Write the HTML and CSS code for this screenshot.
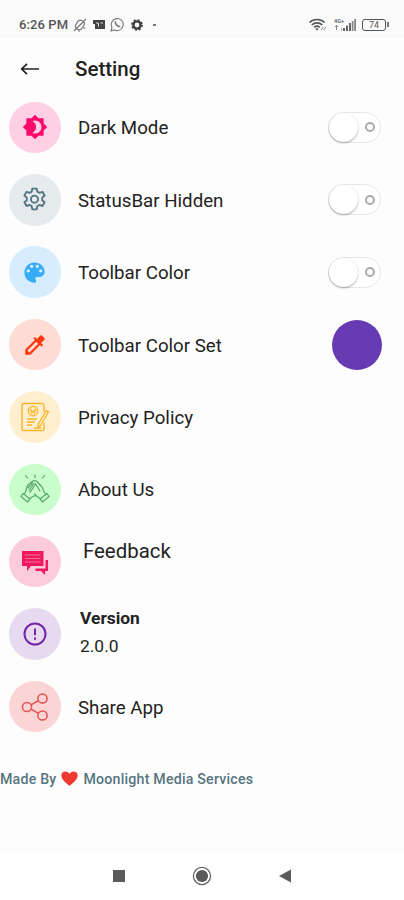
FILE: index.html
```html
<!DOCTYPE html>
<html lang="en">

<head>
    <meta charset="UTF-8">
    <meta name="viewport" content="width=device-width, initial-scale=1.0">
    <title>Setting</title>
    <link rel="stylesheet" href="styles.css">
</head>

<body>
    <!-- Status bar -->
    <div class="status-bar">
        <span class="time">6:26 PM</span>
        <div class="status-left">
            <svg width="14" height="14" viewBox="0 0 14 14" fill="none" stroke="#777" stroke-width="1.2">
                <path d="M2 8.500l3-5.500q3-2 5.500.5 2 2 0 4.500L8 11.500H4.500M2 8.500l2.500 3M1 13L13 1M5 12.800l2 .2M10 10h2.500"/>
            </svg>
            <svg width="12" height="10" viewBox="0 0 12 10">
                <path fill="#444" d="M0 0h12v9H2V4H0z"/>
                <path stroke="#ddd" stroke-width="1" d="M3 3h2M5.500 3v3.500M7.500 3h2.500"/>
            </svg>
            <svg width="15" height="15" viewBox="0 0 15 15" fill="none" stroke="#777" stroke-width="1.100">
                <path d="M1 14l1-3.500a6 6 0 1 1 2.500 2.400z"/>
                <path stroke-width="1.500" d="M5.300 4.300c-.3 3 2.200 5.400 5 5.300"/>
            </svg>
            <svg width="12" height="12" viewBox="0 0 12 12" fill="none" stroke="#3c3c3c">
                <circle cx="6" cy="6" r="3.600" stroke-width="2.400"/>
                <circle cx="6" cy="6" r="5.100" stroke-width="1.600" stroke-dasharray="2 2"/>
            </svg>
            <span class="dot"></span>
        </div>
        <div class="status-right">
            <svg width="20" height="14" viewBox="0 0 20 14" fill="none" stroke="#555" stroke-width="1.700">
                <path d="M1.500 4.500c4-4 11-4 15 0M3.800 7c3-2.800 7.500-2.800 10.500 0M6.200 9.400c1.600-1.400 4-1.400 5.600 0"/>
                <path fill="#444" stroke="none" d="M7.300 10.500h3.400L9 12.700z"/>
                <path stroke="#888" stroke-width="1" d="M13 12l2.500-3M15.500 12L18 9"/>
            </svg>
            <svg class="signal" width="22" height="13" viewBox="0 0 22 13" fill="#666">
                <text x="0" y="5" font-size="5.500" font-weight="bold">4G+</text>
                <path fill="none" stroke="#888" d="M2.500 7v5M1 8.500h3M7.500 12.500v-2"/>
                <path d="M9 10h2v3H9zM12 7.500h2V13h-2zM15 5h2v8h-2z"/>
                <path fill="#888" d="M17.800 3h1.700v10h-1.700zM20.200 1H22v12h-1.800z"/>
            </svg>
            <div class="battery">74</div>
        </div>
    </div>

    <!-- Toolbar -->
    <header class="toolbar">
        <svg width="20" height="14" viewBox="0 0 20 14" fill="none" stroke="#222" stroke-width="1.700">
            <path d="M1.500 7H19M7 1.800L1.700 7 7 12.200"/>
        </svg>
        <h1>Setting</h1>
    </header>

    <main class="settings">
        <div class="row">
            <div class="icon pink">
                <svg width="26" height="26" viewBox="0 0 24 24" fill="#fb0a6b">
                    <path d="M20 8.690V4h-4.690L12 .69 8.690 4H4v4.690L.69 12 4 15.310V20h4.690L12 23.310 15.310 20H20v-4.690L23.310 12 20 8.690zM12 18c-.89 0-1.740-.2-2.500-.55C11.560 16.500 13 14.420 13 12s-1.440-4.500-3.500-5.450C10.260 6.200 11.110 6 12 6c3.310 0 6 2.690 6 6s-2.690 6-6 6z"/>
                </svg>
            </div>
            <span class="label">Dark Mode</span>
            <div class="switch"></div>
        </div>

        <div class="row">
            <div class="icon grey">
                <svg width="25" height="25" viewBox="0 0 24 24" fill="none" stroke="#547583" stroke-width="1.800" stroke-linejoin="round">
                    <path d="M9.900 1.500h4.200l.6 3 2 1.150 2.900-1 2.100 3.600-2.300 2v2.400l2.300 2-2.100 3.600-2.900-1-2 1.150-.6 3.100H9.900l-.6-3.100-2-1.150-2.900 1-2.100-3.600 2.300-2v-2.400l-2.300-2 2.100-3.600 2.900 1 2-1.150z"/>
                    <circle cx="12" cy="11.700" r="3.400"/>
                </svg>
            </div>
            <span class="label">StatusBar Hidden</span>
            <div class="switch"></div>
        </div>

        <div class="row">
            <div class="icon blue">
                <svg width="27" height="27" viewBox="0 0 24 24" fill="#38adf7">
                    <path d="M12 3c-4.970 0-9 4.030-9 9s4.030 9 9 9c.83 0 1.500-.67 1.500-1.500 0-.39-.15-.74-.39-1.010-.23-.26-.38-.61-.38-.99 0-.83.67-1.500 1.500-1.500H16c2.760 0 5-2.240 5-5 0-4.420-4.030-8-9-8zm-5.500 9c-.83 0-1.500-.67-1.500-1.500S5.670 9 6.500 9 8 9.670 8 10.500 7.330 12 6.500 12zm3-4C8.670 8 8 7.330 8 6.500S8.670 5 9.500 5s1.500.67 1.500 1.500S10.330 8 9.500 8zm5 0c-.83 0-1.500-.67-1.500-1.500S13.670 5 14.500 5s1.500.67 1.500 1.500S15.330 8 14.500 8zm3 4c-.83 0-1.500-.67-1.500-1.500S16.670 9 17.500 9s1.500.67 1.500 1.500-.67 1.500-1.500 1.500z"/>
                </svg>
            </div>
            <span class="label">Toolbar Color</span>
            <div class="switch"></div>
        </div>

        <div class="row">
            <div class="icon orange">
                <svg width="26" height="26" viewBox="0 0 24 24" fill="#fb390d">
                    <path d="M20.710 5.630l-2.340-2.340c-.39-.39-1.020-.39-1.410 0l-3.120 3.120-1.930-1.910-1.410 1.410 1.420 1.420L3 16.250V21h4.750l8.920-8.920 1.420 1.420 1.410-1.410-1.920-1.920 3.120-3.120c.4-.4.4-1.030.01-1.420zM6.920 19L5 17.080l8.060-8.060 1.920 1.920L6.920 19z"/>
                </svg>
            </div>
            <span class="label">Toolbar Color Set</span>
            <div class="color-preview"></div>
        </div>

        <div class="row">
            <div class="icon yellow">
                <svg width="30" height="30" viewBox="0 0 30 30" fill="none" stroke="#f8b62c" stroke-width="1.400" stroke-linejoin="round">
                    <path d="M24 10V4q0-2.500-2.500-2.500H4Q2 1.500 2 4v22.500q0 2 2 2h18q2 0 2-2V21"/>
                    <path d="M26.500 8.500l2 1.500-7.800 13.500-2.700 2 .4-3.600z"/>
                    <circle cx="13" cy="9" r="4.700"/>
                    <path d="M10.500 6.500q0 3 2.500 3t2.500-3M11 11.500l2-2 2 2M7 17h10M7 20h8M7 23h5M14 26h7"/>
                </svg>
            </div>
            <span class="label">Privacy Policy</span>
        </div>

        <div class="row">
            <div class="icon green">
                <svg width="30" height="30" viewBox="0 0 30 30" fill="none" stroke="#55a865" stroke-width="1.200" stroke-linejoin="round" stroke-linecap="round">
                    <path d="M5.500 1.500l2 2.500M15 1v2.500M24.500 1.500l-2 2.500"/>
                    <path d="M3 19.500l7 5.500-2.500 3L1 22.500zM27 19.500L20 25l2.500 3 6.500-5.500z"/>
                    <path d="M4.500 20c2-3 1.500-6 3-8.500L12 7.500q3-2 5.500.5l4.500 5c1.500 3 1.500 5 3.500 7M10 24.500l3.500-2.500h3l3.500 2.500M8 14l4.500-5M9 16.500l5-7M10 18.500L15.500 10M15.500 10L20 17M16.500 22l-2-2"/>
                </svg>
            </div>
            <span class="label">About Us</span>
        </div>

        <div class="row">
            <div class="icon rose">
                <svg width="28" height="26" viewBox="0 0 28 26">
                    <path fill="#ee195f" d="M1 2h21.500v15H10l-4 5v-5H1zM24.500 11H27v11h-3v4l-4-4h-5.500v-2.500h10z"/>
                    <path stroke="#f66e9c" d="M4 6h15.500M4 9.500h15.500M4 13h15.500"/>
                </svg>
            </div>
            <span class="label feedback">Feedback</span>
        </div>

        <div class="row">
            <div class="icon purple">
                <svg width="24" height="24" viewBox="0 0 24 24" fill="none" stroke="#7625a9" stroke-width="2">
                    <circle cx="12" cy="12" r="10.500"/>
                    <path d="M12 6.500v6.800M12 15.600v2.100"/>
                </svg>
            </div>
            <div class="version">
                <strong>Version</strong>
                <span>2.0.0</span>
            </div>
        </div>

        <div class="row">
            <div class="icon red">
                <svg width="28" height="28" viewBox="0 0 28 28" fill="none" stroke="#e6504f" stroke-width="1.500">
                    <circle cx="6" cy="14" r="4.600"/>
                    <circle cx="21.500" cy="5.500" r="4.600"/>
                    <circle cx="21.500" cy="22.500" r="4.600"/>
                    <path d="M10 11.800l7.500-4.100M10 16.200l7.500 4.100"/>
                </svg>
            </div>
            <span class="label">Share App</span>
        </div>
    </main>

    <div class="made-by">
        <span>Made By</span>
        <svg width="17" height="15" viewBox="0 0 18 16">
            <path fill="#ee3a31" d="M9 15.800C5 12.500.3 9 .3 4.800.3 2 2.300.4 4.700.4 6.500.4 8.200 1.500 9 3.200 9.800 1.500 11.500.4 13.300.4c2.400 0 4.400 1.600 4.400 4.400 0 4.200-4.700 7.700-8.700 11z"/>
        </svg>
        <span>Moonlight Media Services</span>
    </div>

    <!-- Android navigation -->
    <nav class="nav-bar">
        <svg width="12" height="12" viewBox="0 0 12 12"><path fill="#5a5a5a" d="M0 0h12v12H0z"/></svg>
        <svg width="20" height="20" viewBox="0 0 20 20">
            <circle cx="10" cy="10" r="8.600" fill="none" stroke="#666" stroke-width="1.300"/>
            <circle cx="10" cy="10" r="6.100" fill="#5a5a5a"/>
        </svg>
        <svg width="12" height="14" viewBox="0 0 12 14"><path fill="#5a5a5a" d="M12 .5v13L0 7z"/></svg>
    </nav>
</body>

</html>
```
FILE: styles.css
```css
* {
    box-sizing: border-box;
}

body {
    font-family: Roboto, sans-serif;
    margin: 0;
    height: 900px;
    display: flex;
    flex-direction: column;
    background-color: #fdfdfd;
    color: #222;
    overflow: hidden;
}

svg {
    display: block;
    flex-shrink: 0;
}

/* Status bar */
.status-bar {
    height: 38px;
    padding: 11px 17px 0 19px;
    display: flex;
    align-items: center;
    background-color: #fafafa;
}

.time {
    width: 54px;
    font-size: 13px;
    font-weight: 500;
    letter-spacing: 0.1px;
    color: #555;
    white-space: nowrap;
}

.status-left {
    display: flex;
    align-items: center;
    gap: 5.500px;
}

.dot {
    width: 3px;
    height: 2px;
    margin-left: 5px;
    background-color: #777;
}

.status-right {
    display: flex;
    align-items: center;
    gap: 6px;
    margin-left: auto;
}

.battery {
    position: relative;
    width: 24px;
    height: 12px;
    margin-right: 1px;
    border: 1.5px solid #555;
    border-radius: 3px;
    font-size: 9px;
    line-height: 10px;
    text-align: center;
    color: #555;
}

.battery::after {
    content: "";
    position: absolute;
    right: -4px;
    top: 2px;
    width: 2px;
    height: 5px;
    background-color: #777;
}

/* Toolbar */
.toolbar {
    height: 61px;
    padding-left: 20px;
    display: flex;
    align-items: center;
    gap: 35px;
}

.toolbar h1 {
    margin: 0;
    padding-top: 1px;
    font-size: 20.500px;
    font-weight: 500;
}

/* Settings list */
.settings {
    margin-top: -7.800px;
}

.row {
    height: 72.400px;
    padding: 0 23px 0 9px;
    display: flex;
    align-items: center;
}

.icon {
    width: 51.500px;
    height: 51.500px;
    margin-right: 17.500px;
    border-radius: 50%;
    display: flex;
    justify-content: center;
    align-items: center;
    flex-shrink: 0;
}

.pink {
    background-color: #ffd0e3;
}

.grey {
    background-color: #e5eaed;
}

.blue {
    background-color: #d5edfe;
}

.orange {
    background-color: #fedbd4;
}

.yellow {
    background-color: #ffefcf;
}

.green {
    background-color: #c9fdcb;
}

.rose {
    background-color: #fccbdc;
}

.purple {
    background-color: #e7d9ef;
}

.red {
    background-color: #fbd5d5;
}

.label {
    padding-top: 2px;
    font-size: 18.700px;
    white-space: nowrap;
}

.feedback {
    margin-left: 5px;
    padding-bottom: 23px;
    font-size: 20.400px;
}

.version {
    display: flex;
    flex-direction: column;
    gap: 7px;
    margin-left: 2px;
    padding-bottom: 3px;
    font-size: 17.400px;
    line-height: 21px;
}

.switch {
    width: 53px;
    height: 31px;
    margin-left: auto;
    padding-right: 5px;
    border: 1px solid #e6e6e6;
    border-radius: 16px;
    display: flex;
    align-items: center;
    justify-content: space-between;
    background-color: #fff;
}

.switch::before {
    content: "";
    width: 29px;
    height: 29px;
    border-radius: 50%;
    background-color: #fff;
    box-shadow: 0 1px 2px rgba(0, 0, 0, 0.35);
}

.switch::after {
    content: "";
    width: 6px;
    height: 6px;
    border: 2px solid #aaa;
    border-radius: 50%;
}

.color-preview {
    width: 50px;
    height: 50px;
    margin-left: auto;
    margin-right: -1px;
    border-radius: 50%;
    background-color: #673ab2;
}

.made-by {
    margin-top: 26px;
    display: flex;
    align-items: center;
    gap: 5px;
    font-size: 14.200px;
    font-weight: 500;
    letter-spacing: 0.2px;
    line-height: 20px;
    color: #56757f;
}

/* Android navigation */
.nav-bar {
    height: 46px;
    margin-top: auto;
    padding: 0 113px 2px;
    display: flex;
    align-items: center;
    justify-content: space-between;
    background-color: #fff;
}
```
